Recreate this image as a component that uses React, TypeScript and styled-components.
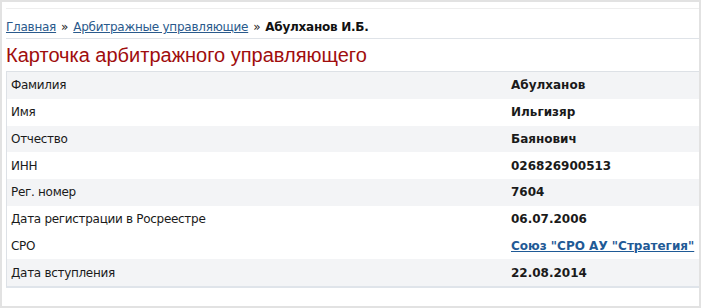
import React from "react";
import styled, { createGlobalStyle } from "styled-components";

const GlobalStyle = createGlobalStyle`
  html, body {
    margin: 0;
    padding: 0;
    background: #ffffff;
  }
  body {
    font-family: "DejaVu Sans", Tahoma, sans-serif;
  }
`;

const Frame = styled.div`
  width: 701px;
  height: 308px;
  border: 2px solid #e2e2e2;
  background: #ffffff;
  overflow: hidden;
  padding: 6px 0 0 4px;
  box-sizing: border-box;
`;

const Content = styled.div`
  border-top: 1px solid #eeeeee;
  margin-right: -10px;
`;

const Crumbs = styled.nav`
  display: flex;
  align-items: baseline;
  gap: 5px;
  height: 30px;
  padding-top: 11px;
  box-sizing: border-box;
  font-size: 12px;
  letter-spacing: -0.25px;
  color: #222222;
  border-bottom: 1px solid #dfe3e8;
`;

const CrumbLink = styled.a`
  color: #2a5a8c;
  text-decoration: underline;
`;

const CrumbCurrent = styled.b`
  color: #111111;
`;

const Title = styled.h1`
  margin: 0;
  height: 31px;
  padding-top: 5px;
  box-sizing: border-box;
  font-family: "Liberation Sans", Arial, sans-serif;
  font-weight: normal;
  font-size: 20px;
  color: #a00d0d;
`;

const Table = styled.div`
  border: 1px solid #dde1e6;
  border-bottom: 2px solid #dfe4ea;
  margin-top: 1px;
`;

const Row = styled.div<{ $shaded?: boolean }>`
  display: grid;
  grid-template-columns: 504px 1fr;
  align-items: center;
  height: 26.75px;
  background: ${(p) => (p.$shaded ? "#f3f4f6" : "#ffffff")};
  font-size: 12px;
  color: #1a1a1a;
`;

const Label = styled.span`
  padding-left: 4px;
  letter-spacing: -0.3px;
`;

const Value = styled.span`
  font-weight: bold;
  white-space: nowrap;
`;

const ValueLink = styled.a`
  color: #1f5a96;
  text-decoration: underline;
`;

const rows: { label: string; value: string; shaded: boolean; link?: boolean }[] = [
  { label: "Фамилия", value: "Абулханов", shaded: true },
  { label: "Имя", value: "Ильгизяр", shaded: false },
  { label: "Отчество", value: "Баянович", shaded: true },
  { label: "ИНН", value: "026826900513", shaded: false },
  { label: "Рег. номер", value: "7604", shaded: true },
  { label: "Дата регистрации в Росреестре", value: "06.07.2006", shaded: false },
  { label: "СРО", value: "Союз \"СРО АУ \"Стратегия\" ", shaded: false, link: true },
  { label: "Дата вступления", value: "22.08.2014", shaded: true },
];

export default function App() {
  return (
    <Frame>
      <GlobalStyle />
      <Content>
        <Crumbs>
          <CrumbLink href="#">Главная</CrumbLink>
          <span>»</span>
          <CrumbLink href="#">Арбитражные управляющие</CrumbLink>
          <span>»</span>
          <CrumbCurrent>Абулханов И.Б.</CrumbCurrent>
        </Crumbs>
        <Title>Карточка арбитражного управляющего</Title>
        <Table>
          {rows.map((r) => (
            <Row key={r.label} $shaded={r.shaded}>
              <Label>{r.label}</Label>
              <Value>{r.link ? <ValueLink href="#">{r.value}</ValueLink> : r.value}</Value>
            </Row>
          ))}
        </Table>
      </Content>
    </Frame>
  );
}
